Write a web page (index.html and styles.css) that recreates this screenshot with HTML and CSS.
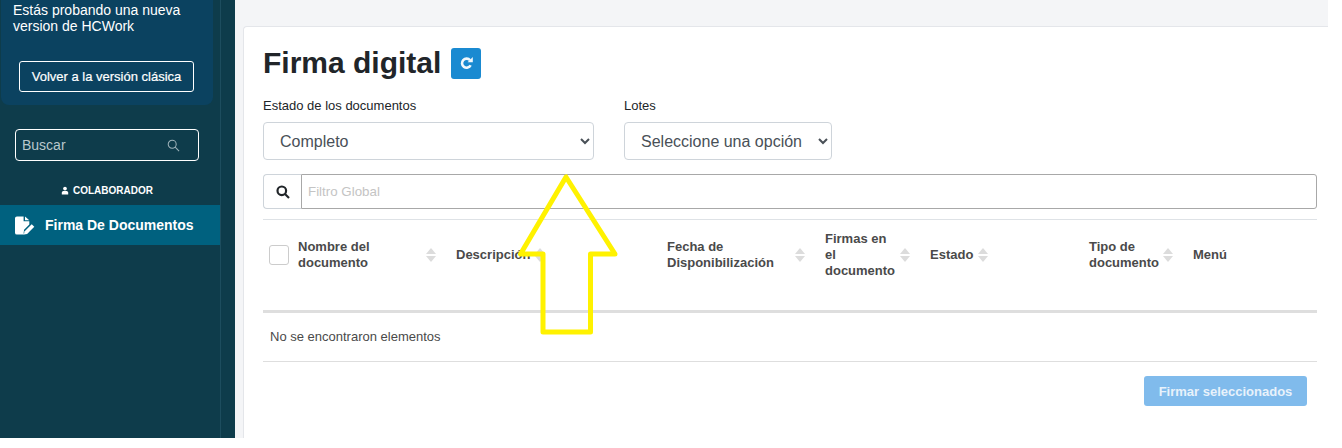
FILE: index.html
```html
<!DOCTYPE html>
<html lang="es">
<head>
<meta charset="utf-8">
<title>Firma digital</title>
<link rel="stylesheet" href="styles.css">
</head>
<body>
<div class="app">
  <aside class="sidebar">
    <div class="side-main">
      <div class="notice">
        <p class="notice-text">Estás probando una nueva version de HCWork</p>
        <a class="classic-btn">Volver a la versión clásica</a>
      </div>
      <div class="search">
        <span class="search-text">Buscar</span>
        <svg class="search-icon" viewBox="0 0 14 14"><circle cx="5.6" cy="5.6" r="4.3"/><path d="M8.8 8.8 13 13"/></svg>
      </div>
      <div class="role">
        <svg class="role-icon" viewBox="0 0 10 10"><circle cx="5" cy="2.6" r="2.3"/><path d="M1 10V7.8C1 6.3 2.2 5.6 3.4 5.6h3.2C7.8 5.6 9 6.3 9 7.8V10z"/></svg>
        <span>COLABORADOR</span>
      </div>
      <div class="nav-item">
        <svg class="nav-icon" viewBox="0 0 22 19"><path class="doc" d="M2 0h7v5h6v3.5L9.5 14 9 17.5 9.8 19H2a2 2 0 0 1-2-2V2a2 2 0 0 1 2-2z"/><path class="doc" d="M10.5 0 15 4h-4.500z"/><path class="doc" d="M17.500 8.200l2.700 2.700-7.500 7.500-3.400.6.600-3.300z"/></svg>
        <span>Firma De Documentos</span>
      </div>
    </div>
  </aside>
  <main class="content">
    <section class="card">
      <div class="title-row">
        <h1>Firma digital</h1>
        <button class="refresh" type="button" aria-label="Actualizar">
          <svg viewBox="0 0 12 12"><path d="M9.800 7.600A4.200 4.200 0 1 1 9.300 3"/><path class="fill" d="M7 4.800h4.800V0z"/></svg>
        </button>
      </div>
      <div class="filters">
        <label class="field field-state">
          <span>Estado de los documentos</span>
          <select><option>Completo</option></select>
        </label>
        <label class="field field-lots">
          <span>Lotes</span>
          <select><option>Seleccione una opción</option></select>
        </label>
      </div>
      <div class="global-filter">
        <span class="prepend">
          <svg viewBox="0 0 14 14"><circle cx="5.800" cy="5.800" r="4.300"/><path d="M9 9l4 4"/></svg>
        </span>
        <input type="text" placeholder="Filtro Global">
      </div>
      <table class="docs">
        <colgroup>
          <col class="c1"><col class="c2"><col class="c3"><col class="c4"><col class="c5"><col class="c6"><col class="c7"><col class="c8">
        </colgroup>
        <thead>
          <tr>
            <th class="check"><span class="checkbox"></span></th>
            <th><div class="th-in"><span>Nombre del documento</span><span class="sort"></span></div></th>
            <th><div class="th-in tight"><span>Descripción</span><span class="sort"></span></div></th>
            <th><div class="th-in"><span>Fecha de Disponibilización</span><span class="sort"></span></div></th>
            <th><div class="th-in"><span>Firmas en<br>el<br>documento</span><span class="sort"></span></div></th>
            <th><div class="th-in tight"><span>Estado</span><span class="sort"></span></div></th>
            <th><div class="th-in"><span>Tipo de documento</span><span class="sort"></span></div></th>
            <th><div class="th-in"><span>Menú</span></div></th>
          </tr>
        </thead>
        <tbody>
          <tr><td colspan="8">No se encontraron elementos</td></tr>
        </tbody>
      </table>
      <div class="actions">
        <button class="sign" type="button">Firmar seleccionados</button>
      </div>
    </section>
  </main>
  <svg class="arrow" viewBox="0 0 104 164" aria-hidden="true"><path d="M48 3 2.500 80H25V158H72.500V80H97z"/></svg>
</div>
</body>
</html>
```
FILE: styles.css
```css
* { box-sizing: border-box; }
html, body { margin: 0; padding: 0; background: #fff; }
body { width: 1342px; height: 448px; overflow: hidden; font-family: "Liberation Sans", Arial, sans-serif; }
.app { position: relative; display: flex; width: 1328px; height: 438px; overflow: hidden; background: #f4f5f7; }

.sidebar { flex: 0 0 235px; background: #0e3c4b; }
.side-main { width: 221px; height: 100%; border-right: 1px solid #1d4d5e; }
.notice { width: 212px; height: 105px; margin-left: 1px; padding: 2px 12px 0; background: #0b4260; border-radius: 0 0 8px 8px; }
.notice-text { margin: 0; color: #fff; font-size: 14px; line-height: 16px; width: 180px; }
.classic-btn { display: block; width: 175px; height: 31px; margin: 27px 0 0 6px; border: 1px solid #fff; border-radius: 3px; color: #fff; font-size: 13px; font-weight: 400; line-height: 29px; text-align: center; -webkit-text-stroke: .2px #fff; }
.search { display: flex; align-items: center; justify-content: space-between; width: 184px; height: 32px; margin: 24px 0 0 15px; padding: 0 18px 0 6px; border: 1px solid #fff; border-radius: 4px; }
.search-text { color: #b9c8cd; font-size: 14px; }
.search-icon { width: 13px; height: 13px; fill: none; stroke: #9fb3ba; stroke-width: 1.100; }
.role { display: flex; align-items: center; justify-content: center; gap: 4px; height: 14px; margin-top: 22px; padding-right: 6px; color: #fff; font-size: 10px; font-weight: 700; }
.role-icon { width: 8px; height: 9px; fill: #fff; }
.nav-item { display: flex; align-items: center; gap: 9px; height: 40px; margin-top: 8px; padding-left: 15px; background: #00617f; color: #fff; font-size: 14px; font-weight: 700; }
.nav-icon { width: 21px; height: 19px; }
.doc { fill: #fff; }

.content { flex: 1; padding: 26px 0 0 8px; min-width: 0; }
.card { height: 100%; padding: 0 11px 0 19px; background: #fff; border: 1px solid #e4e6ea; border-right: 0; border-bottom: 0; border-radius: 4px 0 0 0; }
.title-row { display: flex; align-items: center; gap: 10px; padding-top: 20px; height: 52px; }
h1 { margin: 0; color: #212529; font-size: 30px; font-weight: 700; line-height: 32px; }
.refresh { display: flex; align-items: center; justify-content: center; width: 30px; height: 31px; padding: 0; border: 0; border-radius: 3px; background: #1a8ad1; }
.refresh svg { width: 13px; height: 13px; fill: none; stroke: #f2f8fc; stroke-width: 2.400; }
.refresh .fill { fill: #f2f8fc; stroke: none; }

.filters { display: flex; gap: 30px; margin-top: 20px; }
.field { display: flex; flex-direction: column; }
.field span { color: #212529; font-size: 13px; line-height: 14px; margin-bottom: 9px; }
.field select { height: 38px; padding: 0 8px 0 12px; border: 1px solid #ced4da; border-radius: 4px; background: #fff; color: #495057; font-family: inherit; font-size: 16px; }
.field-state select { width: 331px; }
.field-lots select { width: 208px; }

.global-filter { display: flex; height: 35px; margin-top: 14px; }
.prepend { display: flex; align-items: center; justify-content: center; width: 38px; border: 1px solid #ced4da; border-right: 0; border-radius: 4px 0 0 4px; }
.prepend svg { width: 14px; height: 14px; fill: none; stroke: #212529; stroke-width: 2.200; }
.global-filter input { flex: 1; padding: 0 6px; border: 1px solid #a8a8a8; border-radius: 0 3px 3px 0; font-family: inherit; font-size: 13.333px; outline: 0; }
.global-filter input::placeholder { color: #c4c4c4; opacity: 1; }

.docs { width: 100%; margin-top: 10px; border-collapse: collapse; table-layout: fixed; border-top: 1px solid #dee2e6; }
.c1 { width: 28px; } .c2 { width: 158px; } .c3 { width: 211px; } .c4 { width: 158px; }
.c5 { width: 105px; } .c6 { width: 159px; } .c7 { width: 104px; }
.docs th { height: 92px; padding: 11px 7px 0; border-bottom: 3px solid #dedede; color: #4a4a4a; font-size: 13px; font-weight: 700; line-height: 16px; text-align: left; vertical-align: top; }
.docs .check { padding: 25px 0 0 6px; }
.checkbox { display: block; width: 20px; height: 20px; border: 1px solid #ccc; border-radius: 3px; background: #fff; }
.th-in { display: flex; align-items: center; justify-content: space-between; min-height: 48px; padding-right: 5px; }
.th-in.tight { justify-content: flex-start; gap: 5px; }
.sort { position: relative; flex: 0 0 11px; width: 11px; height: 14px; }
.sort::before, .sort::after { content: ""; position: absolute; left: 0; border-left: 5.500px solid transparent; border-right: 5.500px solid transparent; }
.sort::before { top: 0; border-bottom: 6px solid #dcdcdc; }
.sort::after { bottom: 0; border-top: 6px solid #dcdcdc; }
.docs td { height: 50px; padding: 0 7px 2px; border-bottom: 1px solid #dedede; color: #4a4a4a; font-size: 13px; }

.actions { display: flex; justify-content: flex-end; padding: 14px 10px 0 0; }
.sign { width: 163px; height: 30px; padding: 0; border: 0; border-radius: 3px; background: #80bbec; color: #e8f2fb; font-family: inherit; font-size: 13px; font-weight: 700; }

.arrow { position: absolute; left: 518px; top: 174px; width: 104px; height: 164px; fill: none; stroke: #fff200; stroke-width: 5; stroke-linejoin: round; }
```
